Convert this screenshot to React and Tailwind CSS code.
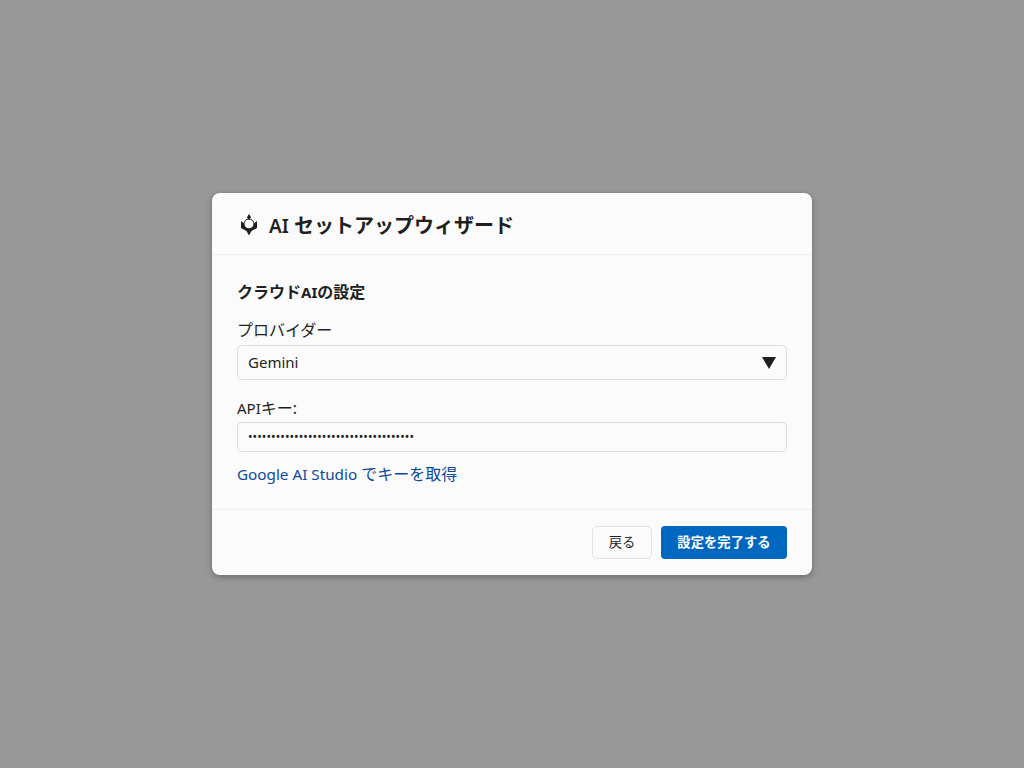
export default function App() {
  return (
    <div className="flex h-screen items-center justify-center bg-[#989898] font-['Noto_Sans','Noto_Sans_CJK_JP',sans-serif] text-[#1f1f1f]">
      <div className="w-[600px] rounded-lg bg-[#fbfbfb] shadow-[0_2px_6px_rgba(0,0,0,0.3)]">
        {/* Header */}
        <div className="flex h-[62px] items-center gap-2 border-b border-[#eeeeee] px-[25px] pt-[5px]">
          <WizardIcon />
          <h1 className="text-[20px] leading-[28px] font-bold"><span className="text-[19px] font-semibold">AI</span> セットアップウィザード</h1>
        </div>

        {/* Body */}
        <div className="h-[254px] px-[25px] pt-[24px]">
          <h2 className="text-base leading-[26px] font-bold">クラウド<span className="text-[15px]">AI</span>の設定</h2>
          <label className="mt-[13px] block text-base leading-[24px]">プロバイダー</label>
          <div className="mt-[3px] flex h-[35px] items-center justify-between rounded-[5px] border border-[#dddddd] px-[10px] text-[15px]">
            <span>Gemini</span>
            <span className="h-0 w-0 border-x-[7px] border-t-[12px] border-x-transparent border-t-[#1f1f1f]" />
          </div>
          <label className="mt-[16px] block text-base leading-[24px]"><span className="text-[15px]">API</span>キー:</label>
          <div className="mt-[2px] flex h-[30px] items-center rounded-[5px] border border-[#dddddd] px-[10px] text-xs">
            <span className="tracking-[0.1px]">{"•".repeat(36)}</span>
          </div>
          <a className="mt-[10px] block text-base leading-[24px] text-[#0f4a9c]"><span className="text-[15.25px]">Google AI Studio</span> でキーを取得</a>
        </div>

        {/* Footer */}
        <div className="flex h-[66px] items-center justify-end gap-[9px] border-t border-[#eeeeee] px-[25px]">
          <button className="h-[33px] w-[60px] rounded-[5px] border border-[#e3e3e3] text-[13.33px]">戻る</button>
          <button className="h-[33px] w-[126px] rounded-[4px] bg-[#0067c0] text-[13.33px] font-bold text-white">設定を完了する</button>
        </div>
      </div>
    </div>
  );
}

function WizardIcon() {
  return (
    <svg width="24" height="24" viewBox="0 0 24 24" className="shrink-0">
      <path fill="#1f1f1f" d="M12 0 14 3 12.8 5.2H11.2L10 3Z" />
      <circle cx="12" cy="10" r="5" fill="none" stroke="#1f1f1f" strokeWidth="1" />
      <path fill="#1f1f1f" d="M4 7 7 9.5A5 5 0 0 0 17 9.5L20 7V14L14.5 17 12 21.5 9.5 17 4 14Z" />
    </svg>
  );
}
